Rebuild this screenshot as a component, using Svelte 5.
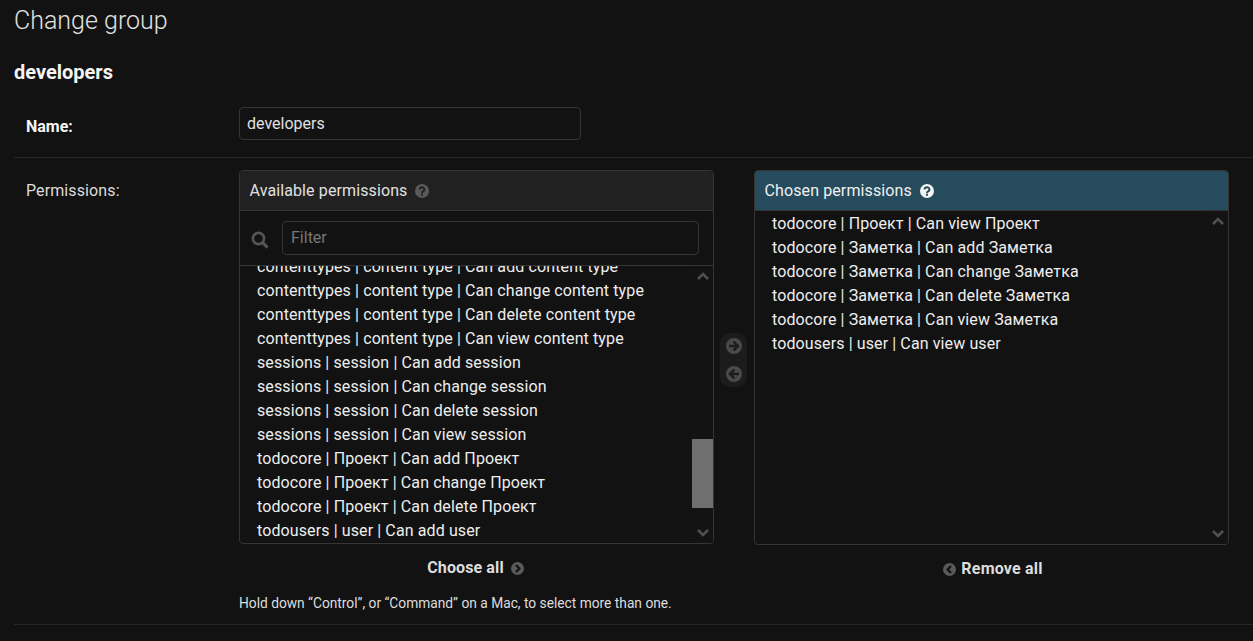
<script>
	const available = [
		'contenttypes | content type | Can add content type',
		'contenttypes | content type | Can change content type',
		'contenttypes | content type | Can delete content type',
		'contenttypes | content type | Can view content type',
		'sessions | session | Can add session',
		'sessions | session | Can change session',
		'sessions | session | Can delete session',
		'sessions | session | Can view session',
		'todocore | Проект | Can add Проект',
		'todocore | Проект | Can change Проект',
		'todocore | Проект | Can delete Проект',
		'todousers | user | Can add user'
	];

	const chosen = [
		'todocore | Проект | Can view Проект',
		'todocore | Заметка | Can add Заметка',
		'todocore | Заметка | Can change Заметка',
		'todocore | Заметка | Can delete Заметка',
		'todocore | Заметка | Can view Заметка',
		'todousers | user | Can view user'
	];
</script>

{#snippet help(color, mark)}
	<svg class="help" width="14" height="14" viewBox="0 0 14 14">
		<circle cx="7" cy="7" r="7" fill={color} />
		<path d="M4.6 5.5a2.4 2.2 0 1 1 3.6 1.8c-.8.5-1.2.8-1.2 1.6" fill="none" stroke={mark} stroke-width="1.9" />
		<rect x="6" y="9.7" width="2" height="2" fill={mark} />
	</svg>
{/snippet}

{#snippet arrow(dir)}
	<svg width="16" height="16" viewBox="0 0 16 16">
		<circle cx="8" cy="8" r="8" fill="#4a4a4a" />
		{#if dir === 'right'}
			<path d="M3 8h8.5M7.6 3.6 12 8l-4.4 4.4" fill="none" stroke="#1c1c1c" stroke-width="2.4" />
		{:else}
			<path d="M13 8H4.5M8.4 3.6 4 8l4.4 4.4" fill="none" stroke="#1c1c1c" stroke-width="2.4" />
		{/if}
	</svg>
{/snippet}

{#snippet roundChevron(dir)}
	<svg width="13" height="13" viewBox="0 0 13 13">
		<circle cx="6.5" cy="6.5" r="6.5" fill="#5a5a5a" />
		<path d={dir === 'right' ? 'M5 3l3.4 3.5L5 10' : 'M8 3 4.6 6.5 8 10'} fill="none" stroke="#121212" stroke-width="2.2" />
	</svg>
{/snippet}

{#snippet chevron(dir)}
	<svg width="12" height="8" viewBox="0 0 12 8">
		<path d={dir === 'up' ? 'M1 7l5-5 5 5' : 'M1 1l5 5 5-5'} fill="none" stroke="#505050" stroke-width="2.6" />
	</svg>
{/snippet}

{#snippet scrollbar(thumb)}
	<div class="scrollbar">
		<span class="chev">{@render chevron('up')}</span>
		{#if thumb}<div class="thumb"></div>{/if}
		<span class="chev">{@render chevron('down')}</span>
	</div>
{/snippet}

<div class="page">
	<h1>Change group</h1>
	<h2>developers</h2>

	<div class="row name-row">
		<label class="strong" for="name">Name:</label>
		<input id="name" class="name-input" type="text" value="developers" />
	</div>

	<div class="row perm-row">
		<div class="perm-label">Permissions:</div>
		<div class="perm-field">
			<div class="selector">
				<div class="col">
					<div class="box">
						<div class="box-title">
							Available permissions
							{@render help('#5a5a5a', '#212121')}
						</div>
						<div class="filter">
							<svg class="search" width="18" height="18" viewBox="0 0 18 18">
								<circle cx="7.5" cy="7.5" r="5.6" fill="none" stroke="#555" stroke-width="2.6" />
								<path d="M11.6 11.6l5 5" stroke="#555" stroke-width="3" />
							</svg>
							<input class="filter-input" type="text" placeholder="Filter" />
						</div>
						<div class="list scrolled">
							<ul>
								{#each available as item}
									<li>{item}</li>
								{/each}
							</ul>
							{@render scrollbar(true)}
						</div>
					</div>
					<div class="action choose">
						Choose all
						{@render roundChevron('right')}
					</div>
				</div>

				<div class="movers">
					{@render arrow('right')}
					{@render arrow('left')}
				</div>

				<div class="col">
					<div class="box chosen-box">
						<div class="box-title chosen-title">
							Chosen permissions
							{@render help('#f4f4f4', '#264b5d')}
						</div>
						<div class="list">
							<ul>
								{#each chosen as item}
									<li>{item}</li>
								{/each}
							</ul>
							{@render scrollbar(false)}
						</div>
					</div>
					<div class="action remove">
						{@render roundChevron('left')}
						Remove all
					</div>
				</div>
			</div>
			<p class="help-text">Hold down “Control”, or “Command” on a Mac, to select more than one.</p>
		</div>
	</div>
</div>

<style>
	:global(body) {
		background: #121212;
		overflow: hidden;
	}

	.page {
		height: 641px;
		box-sizing: border-box;
		padding-left: 14px;
		font-family: Roboto, sans-serif;
		font-size: 16px;
		letter-spacing: 0.11px;
		color: #eeeeee;
		background: #121212;
	}

	h1 {
		margin: 0;
		padding-top: 6px;
		font-size: 25px;
		line-height: 30px;
		font-weight: 300;
		letter-spacing: 0;
		color: #e2e2e2;
	}

	h2 {
		margin: 20px 0 0;
		font-size: 20px;
		line-height: 32px;
		font-weight: 700;
		letter-spacing: 0;
		color: #f5f5f5;
	}

	.row {
		display: flex;
		border-bottom: 1px solid #272727;
		padding-left: 12px;
	}

	.name-row {
		margin-top: 19px;
		height: 50px;
		box-sizing: content-box;
	}

	.strong {
		width: 213px;
		font-weight: 700;
		font-size: 16px;
		letter-spacing: 0;
		line-height: 39px;
		color: #f5f5f5;
	}

	.name-input {
		box-sizing: border-box;
		width: 342px;
		height: 33px;
		padding: 0 7px;
		background: #121212;
		border: 1px solid #353535;
		border-radius: 4px;
		color: #e0e0e0;
		font: 16px Roboto, sans-serif;
		outline: none;
	}

	.perm-row {
		height: 454px;
		padding-top: 12px;
	}

	.perm-label {
		width: 213px;
		line-height: 16px;
		padding-top: 13px;
		font-size: 16px;
		color: #dddddd;
	}

	.selector {
		display: flex;
	}

	.col {
		width: 475px;
	}

	.box {
		box-sizing: border-box;
		height: 374px;
		display: flex;
		flex-direction: column;
		border: 1px solid #353535;
		border-radius: 4px;
		overflow: hidden;
	}

	.chosen-box {
		height: 375px;
	}

	.box-title {
		display: flex;
		align-items: center;
		gap: 8px;
		box-sizing: border-box;
		height: 40px;
		padding-left: 9.5px;
		font-size: 16px;
		background: #212121;
		border-bottom: 1px solid #353535;
		color: #e0e0e0;
	}

	.chosen-title {
		background: #264b5d;
		color: #f0f0f0;
	}

	.help {
		display: block;
		margin-top: 1px;
	}

	.filter {
		display: flex;
		align-items: center;
		box-sizing: border-box;
		height: 55px;
		padding: 0 14px 1px 11px;
		gap: 13px;
		border-bottom: 1px solid #353535;
	}

	.search {
		flex: none;
		margin-top: 5px;
	}

	.filter-input {
		flex: 1;
		box-sizing: border-box;
		height: 34px;
		padding: 0 8px;
		background: #121212;
		border: 1px solid #353535;
		border-radius: 4px;
		font: 16px Roboto, sans-serif;
		color: #e0e0e0;
		outline: none;
	}

	.filter-input::placeholder {
		color: #777777;
		opacity: 1;
	}

	.list {
		position: relative;
		flex: 1;
		overflow: hidden;
	}

	ul {
		list-style: none;
		margin: 0;
		padding: 1px 0 0 17px;
	}

	.scrolled ul {
		margin-top: -12px;
	}

	li {
		height: 24px;
		line-height: 24px;
		font-size: 16px;
		white-space: nowrap;
		color: #eeeeee;
	}

	.scrollbar {
		position: absolute;
		top: 0;
		right: 0;
		bottom: 0;
		width: 21px;
		display: flex;
		flex-direction: column;
		justify-content: space-between;
		align-items: center;
		background: #131313;
	}

	.chev {
		display: block;
		line-height: 0;
		padding: 6px 0 8px;
	}

	.chev:last-child {
		padding: 8px 0 6px;
	}

	.thumb {
		position: absolute;
		left: 0;
		right: 0;
		top: 173px;
		height: 69px;
		background: #6f6f6f;
	}

	.movers {
		flex: none;
		box-sizing: border-box;
		width: 27px;
		height: 54px;
		margin: 163px 7px 0 6px;
		padding: 5px 0;
		display: flex;
		flex-direction: column;
		justify-content: space-between;
		align-items: center;
		background: #1c1c1c;
		border-radius: 10px;
	}

	.action {
		display: flex;
		align-items: center;
		justify-content: center;
		gap: 7px;
		margin-top: 13px;
		height: 20px;
		font-size: 16px;
		font-weight: 700;
		color: #dddddd;
	}

	.choose {
		padding-right: 2px;
	}

	.remove {
		gap: 5px;
		padding-left: 3px;
		letter-spacing: 0.2px;
	}

	.action svg {
		margin-top: 3px;
	}

	.help-text {
		margin: 17px 0 0;
		font-size: 13.75px;
		letter-spacing: 0;
		line-height: 17px;
		color: #dddddd;
	}
</style>
